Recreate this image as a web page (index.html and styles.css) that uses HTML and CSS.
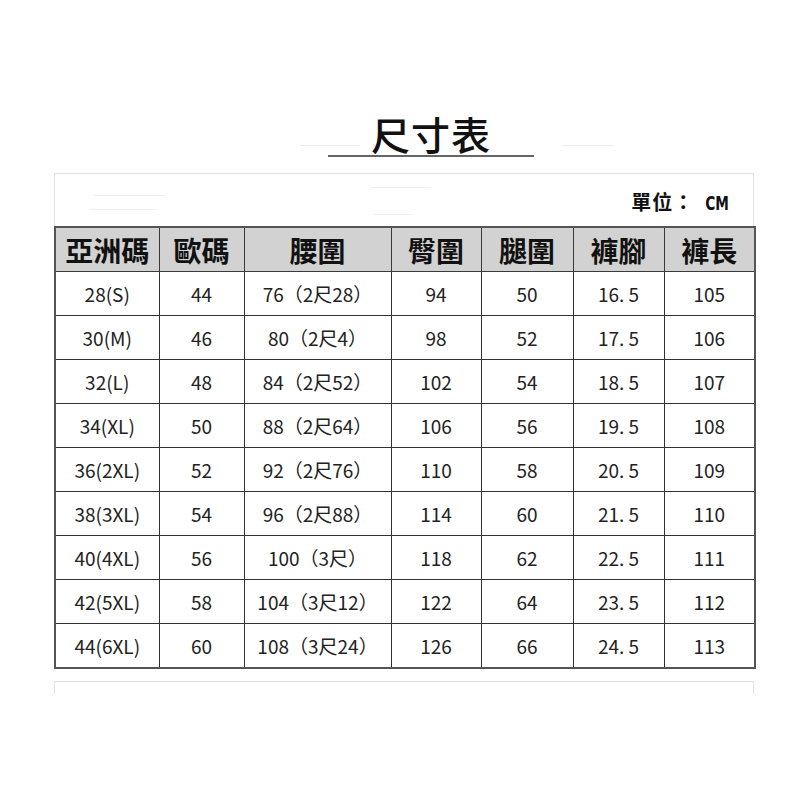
FILE: index.html
```html
<!DOCTYPE html>
<html lang="zh-Hant">
<head>
<meta charset="utf-8">
<link rel="stylesheet" href="styles.css">
</head>
<body>
<div class="page">
  <div class="title-wrap">
    <div class="faint faint-l"></div>
    <h1 class="title">尺寸表</h1>
    <div class="faint faint-r"></div>
  </div>
  <div class="sheet">
    <div class="unit-bar">
      <div class="ghost ghost-1"></div>
      <div class="ghost ghost-2"></div>
      <div class="ghost ghost-3"></div>
      <div class="ghost ghost-4"></div>
      <span class="unit">單位：<span class="cm">CM</span></span>
    </div>
    <table class="size">
      <colgroup>
        <col class="c1"><col class="c2"><col class="c3"><col class="c4"><col class="c5"><col class="c6"><col class="c7">
      </colgroup>
      <thead>
        <tr><th>亞洲碼</th><th>歐碼</th><th>腰圍</th><th>臀圍</th><th>腿圍</th><th>褲腳</th><th>褲長</th></tr>
      </thead>
      <tbody>
        <tr><td>28(S)</td><td>44</td><td>76（2尺28）</td><td>94</td><td>50</td><td>16. 5</td><td>105</td></tr>
        <tr><td>30(M)</td><td>46</td><td>80（2尺4）</td><td>98</td><td>52</td><td>17. 5</td><td>106</td></tr>
        <tr><td>32(L)</td><td>48</td><td>84（2尺52）</td><td>102</td><td>54</td><td>18. 5</td><td>107</td></tr>
        <tr><td>34(XL)</td><td>50</td><td>88（2尺64）</td><td>106</td><td>56</td><td>19. 5</td><td>108</td></tr>
        <tr><td>36(2XL)</td><td>52</td><td>92（2尺76）</td><td>110</td><td>58</td><td>20. 5</td><td>109</td></tr>
        <tr><td>38(3XL)</td><td>54</td><td>96（2尺88）</td><td>114</td><td>60</td><td>21. 5</td><td>110</td></tr>
        <tr><td>40(4XL)</td><td>56</td><td>100（3尺）</td><td>118</td><td>62</td><td>22. 5</td><td>111</td></tr>
        <tr><td>42(5XL)</td><td>58</td><td>104（3尺12）</td><td>122</td><td>64</td><td>23. 5</td><td>112</td></tr>
        <tr><td>44(6XL)</td><td>60</td><td>108（3尺24）</td><td>126</td><td>66</td><td>24. 5</td><td>113</td></tr>
      </tbody>
    </table>
    <div class="foot-box"></div>
  </div>
</div>
</body>
</html>
```
FILE: styles.css
```css
html, body {
  margin: 0;
  padding: 0;
  background: #ffffff;
}
.page {
  width: 800px;
  height: 800px;
  padding-top: 113px;
  box-sizing: border-box;
  font-family: "Noto Sans CJK TC", "Noto Sans", sans-serif;
  color: #1a1a1a;
}
.title-wrap {
  position: relative;
  display: flex;
  justify-content: center;
  margin-left: 62px;
  height: 44px;
}
.title {
  margin: 0;
  width: 206px;
  text-align: center;
  font-size: 39px;
  line-height: 40px;
  font-weight: 500;
  letter-spacing: 1px;
  color: #111;
  border-bottom: 2px solid #666;
  height: 42px;
}
.faint {
  position: absolute;
  top: 32px;
  height: 1px;
  background: #ececec;
}
.faint-l { left: 238px; width: 60px; }
.faint-r { left: 500px; width: 52px; }
.sheet {
  margin-left: 54px;
  width: 700px;
  margin-top: 16px;
}
.unit-bar {
  position: relative;
  height: 53px;
  border: 1px solid #e2e2e2;
  border-bottom: none;
  box-sizing: border-box;
  display: flex;
  align-items: center;
  justify-content: flex-end;
  padding-right: 24px;
  padding-top: 3px;
}
.ghost {
  position: absolute;
  height: 1px;
  background: #efefef;
}
.ghost-1 { left: 38px; top: 21px; width: 72px; }
.ghost-2 { left: 34px; top: 35px; width: 68px; }
.ghost-3 { left: 316px; top: 13px; width: 60px; }
.ghost-4 { left: 318px; top: 40px; width: 40px; }
.unit {
  font-size: 20px;
  font-weight: 700;
  color: #111;
  letter-spacing: 1px;
}
.cm {
  font-family: "DejaVu Sans", sans-serif;
  font-size: 19px;
  font-weight: 700;
  margin-left: 2px;
  transform: scaleX(0.72);
  transform-origin: right center;
  display: inline-block;
  letter-spacing: 0;
}
.size {
  border-collapse: collapse;
  table-layout: fixed;
  width: 700px;
  border: 2px solid #555;
}
.c1 { width: 104px; }
.c2 { width: 85px; }
.c3 { width: 147px; }
.c4 { width: 90px; }
.c5 { width: 92px; }
.c6 { width: 91px; }
.c7 { width: 91px; }
.size th {
  background: #d2d2d2;
  height: 43px;
  padding: 0;
  font-size: 28px;
  font-weight: 700;
  color: #111;
  border: 1.5px solid #3a3a3a;
  line-height: 40px;
}
.size td {
  height: 43px;
  padding: 0;
  text-align: center;
  font-size: 19px;
  color: #222;
  border: 1.5px solid #333;
  line-height: 40px;
}
.foot-box {
  margin-top: 12px;
  height: 12px;
  border: 1px solid #e2e2e2;
  border-bottom: none;
}
```
